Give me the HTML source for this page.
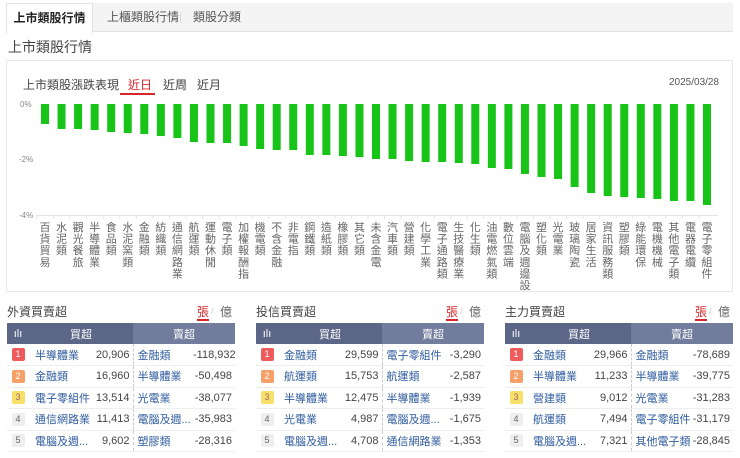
<!DOCTYPE html>
<html><head><meta charset="utf-8">
<style>
*{margin:0;padding:0;box-sizing:border-box}
body{width:740px;height:458px;overflow:hidden;background:#fff;font-family:"Liberation Sans","Noto Sans CJK TC",sans-serif;color:#333;position:relative}
.tabs{position:absolute;left:6px;top:3px;width:727px;height:29px;background:#f4f4f4;border-bottom:1px solid #e2e2e2}
.tab{position:absolute;top:0;height:29px;line-height:29px;font-size:12px;color:#555;white-space:nowrap}
.tab.on{background:#fff;border:1px solid #e2e2e2;border-bottom:none;height:30px;color:#222;font-weight:bold;width:87px;text-align:center;left:0}
.title{position:absolute;left:8px;top:37px;font-size:14px;color:#444}
.box{position:absolute;left:6px;top:60px;width:727px;height:232px;border:1px solid #e8e8e8}
.ph{position:absolute;font-size:12px;white-space:nowrap}
table{position:absolute;border-collapse:collapse;font-size:11px;table-layout:fixed}
td{height:21.5px;border-bottom:1px solid #eee;white-space:nowrap;overflow:hidden}
th{height:21px;background:#5c6788;color:#fff;font-weight:normal;font-size:11px}
th.r{background:#727d9d}
.rk{display:inline-block;width:13px;height:13px;line-height:13px;text-align:center;font-size:9px;border-radius:2px;color:#fff}
.n{color:#2f5c9e}
.v{text-align:right;color:#444;padding-right:3px}
.sep{border-left:1px dashed #ccc}
</style></head><body>
<div class="tabs">
<div class="tab on">上市類股行情</div>
<div class="tab" style="left:101px">上櫃類股行情</div>
<div class="tab" style="left:173px;color:#ddd">|</div>
<div class="tab" style="left:187px">類股分類</div>
</div>
<div class="title">上市類股行情</div>
<div class="box"></div>
<div class="ph" style="left:23px;top:76px;color:#444">上市類股漲跌表現</div>
<div class="ph" style="left:128px;top:76px;color:#d9262b">近日</div>
<div style="position:absolute;left:120px;top:93px;width:35px;height:2px;background:#d9262b"></div>
<div class="ph" style="left:163px;top:76px;color:#444">近周</div>
<div class="ph" style="left:197px;top:76px;color:#444">近月</div>
<div class="ph" style="left:669px;top:77px;font-size:10px;color:#555">2025/03/28</div>
<svg style="position:absolute;left:0;top:0" width="740" height="300" id="c">
<g font-size="8" fill="#888" font-family="Liberation Sans"><text x="20" y="107">0%</text><text x="19" y="162">-2%</text><text x="19" y="218">-4%</text></g>
<line x1="36" y1="215.5" x2="718" y2="215.5" stroke="#e5e5e5"/>
</svg>
<script>
var b=[124,129,129,130,132,133,134,136,138,142,143,143,146,149,150,150,155,155,156,157,159,159,161,162,162,163,164,168,169,174,177,179,187,193,196,197,198,199,201,201,205];
var L=["百貨貿易","水泥類","觀光餐旅","半導體業","食品類","水泥窯類","金融類","紡織類","通信網路業","航運類","運動休閒","電子類","加權報酬指","機電類","不含金融","非電指","鋼鐵類","造紙類","橡膠類","其它類","未含金電","汽車類","營建類","化學工業","電子通路類","生技醫療業","化生類","油電燃氣類","數位雲端","電腦及週邊設","塑化類","光電業","玻璃陶瓷","居家生活","資訊服務類","塑膠類","綠能環保","電機機械","其他電子類","電器電纜","電子零組件"];
var s='';
for(var i=0;i<41;i++){var x=41+i*16.55;s+='<rect x="'+x+'" y="104" width="8" height="'+(b[i]-104)+'" fill="#18c418"/>';
s+='<line x1="'+(x-4)+'" y1="215" x2="'+(x-4)+'" y2="219" stroke="#e5e5e5"/>';
for(var j=0;j<L[i].length;j++)s+='<text x="'+(x+4)+'" y="'+(231+j*11.6)+'" font-size="11" fill="#666" text-anchor="middle" font-family="Noto Sans CJK TC">'+L[i][j]+'</text>';}
document.getElementById('c').innerHTML+=s;
</script>
<script>
var P=[[7,"外資買賣超",[["半導體業","20,906","金融類","-118,932"],["金融類","16,960","半導體業","-50,498"],["電子零組件","13,514","光電業","-38,077"],["通信網路業","11,413","電腦及週...","-35,983"],["電腦及週...","9,602","塑膠類","-28,316"]]],
[256,"投信買賣超",[["金融類","29,599","電子零組件","-3,290"],["航運類","15,753","航運類","-2,587"],["半導體業","12,475","半導體業","-1,939"],["光電業","4,987","電腦及週...","-1,675"],["電腦及週...","4,708","通信網路業","-1,353"]]],
[505,"主力買賣超",[["金融類","29,966","金融類","-78,689"],["半導體業","11,233","半導體業","-39,775"],["營建類","9,012","光電業","-31,283"],["航運類","7,494","電子零組件","-31,179"],["電腦及週...","7,321","其他電子類","-28,845"]]]];
var C=["#ef5a5a","#f7a06a","#f7e06a","#eee","#eee"],h='';
P.forEach(function(p){var x=p[0];
h+='<div class="ph" style="left:'+x+'px;top:303px;font-size:12px;color:#444">'+p[1]+'</div>';
h+='<div class="ph" style="left:'+(x+190)+'px;top:303px;color:#d9262b">張</div><div style="position:absolute;left:'+(x+190)+'px;top:319px;width:12px;height:2px;background:#d9262b"></div><div class="ph" style="left:'+(x+204)+'px;color:#ccc;font-size:9px;top:306px">/</div><div class="ph" style="left:'+(x+213)+'px;top:303px;color:#666">億</div>';
h+='<table style="left:'+x+'px;top:323px;width:228px"><colgroup><col style="width:22px"><col style="width:62px"><col style="width:42px"><col style="width:60px"><col style="width:42px"></colgroup><tr><th>ılı</th><th colspan="2">買超</th><th class="r" colspan="2">賣超</th></tr>';
p[2].forEach(function(r,k){h+='<tr><td style="text-align:center"><span class="rk" style="background:'+C[k]+';color:'+(k>2?'#666':(k==2?'#a66':'#fff'))+'">'+(k+1)+'</span></td><td class="n" style="padding-left:6px">'+r[0]+'</td><td class="v">'+r[1]+'</td><td class="n sep" style="padding-left:4px">'+r[2]+'</td><td class="v">'+r[3]+'</td></tr>';});
h+='</table>';});
document.body.insertAdjacentHTML('beforeend',h);
</script>
</body></html>
